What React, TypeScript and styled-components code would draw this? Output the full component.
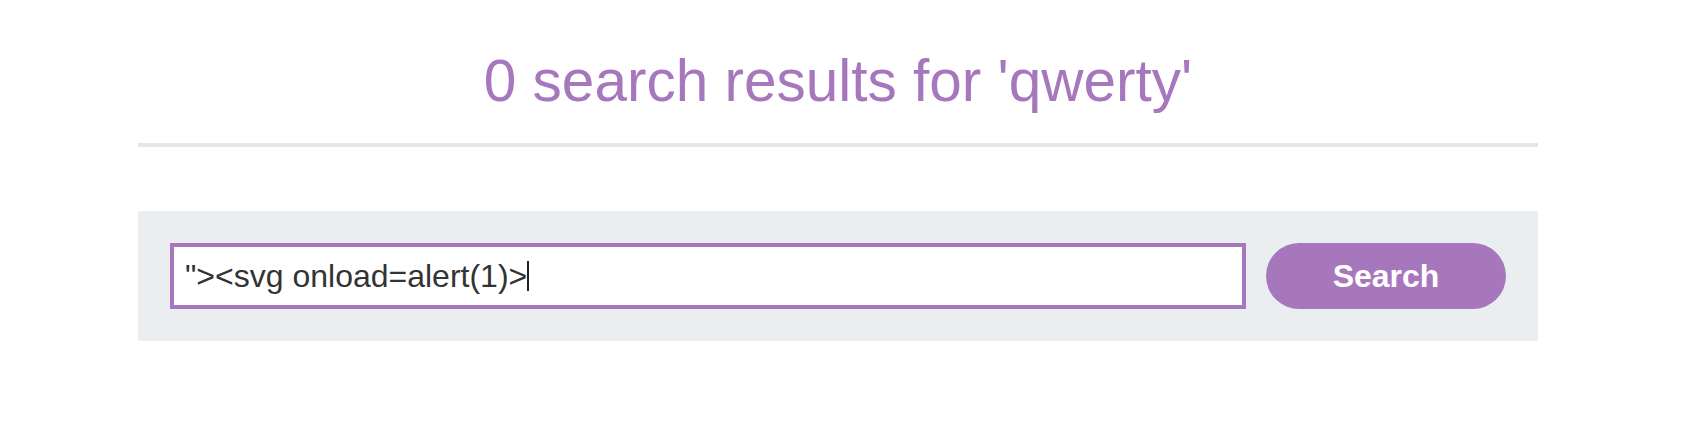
import React from 'react';
import styled, { createGlobalStyle } from 'styled-components';

const purple = '#a777bd';

const GlobalStyle = createGlobalStyle`
    html, body {
        margin: 0;
        padding: 0;
        background: #fff;
    }
    body {
        font-family: 'Liberation Sans', Arial, Helvetica, sans-serif;
    }
`;

const Page = styled.main`
    width: 1400px;
    margin-left: 138px;
    padding-top: 52px;
`;

const Heading = styled.h1`
    margin: 0;
    padding-bottom: 33px;
    border-bottom: 4px solid #e6e6e6;
    text-align: center;
    font-size: 58.5px;
    line-height: 58px;
    font-weight: normal;
    color: ${purple};
`;

const SearchPanel = styled.form`
    display: flex;
    align-items: center;
    gap: 20px;
    margin-top: 64px;
    padding: 32px;
    background: #ebeef1;
`;

const Field = styled.div`
    flex: 1;
    display: flex;
    align-items: center;
    height: 66px;
    box-sizing: border-box;
    padding-left: 11px;
    border: 4px solid ${purple};
    background: #fff;
    font-size: 32px;
    color: #333;
    white-space: pre;
`;

const Caret = styled.span`
    display: inline-block;
    width: 2px;
    height: 30px;
    background: #222;
`;

const SearchButton = styled.button`
    width: 240px;
    height: 66px;
    border: none;
    border-radius: 33px;
    background: ${purple};
    color: #fff;
    font-family: inherit;
    font-size: 32px;
    font-weight: bold;
    cursor: pointer;
`;

export default function App() {
    const query = '"><svg onload=alert(1)>';
    return (
        <>
            <GlobalStyle />
            <Page>
                <Heading>0 search results for 'qwerty'</Heading>
                <SearchPanel onSubmit={(e) => e.preventDefault()}>
                    <Field>
                        <span>{query}</span>
                        <Caret />
                    </Field>
                    <SearchButton type="submit">Search</SearchButton>
                </SearchPanel>
            </Page>
        </>
    );
}
